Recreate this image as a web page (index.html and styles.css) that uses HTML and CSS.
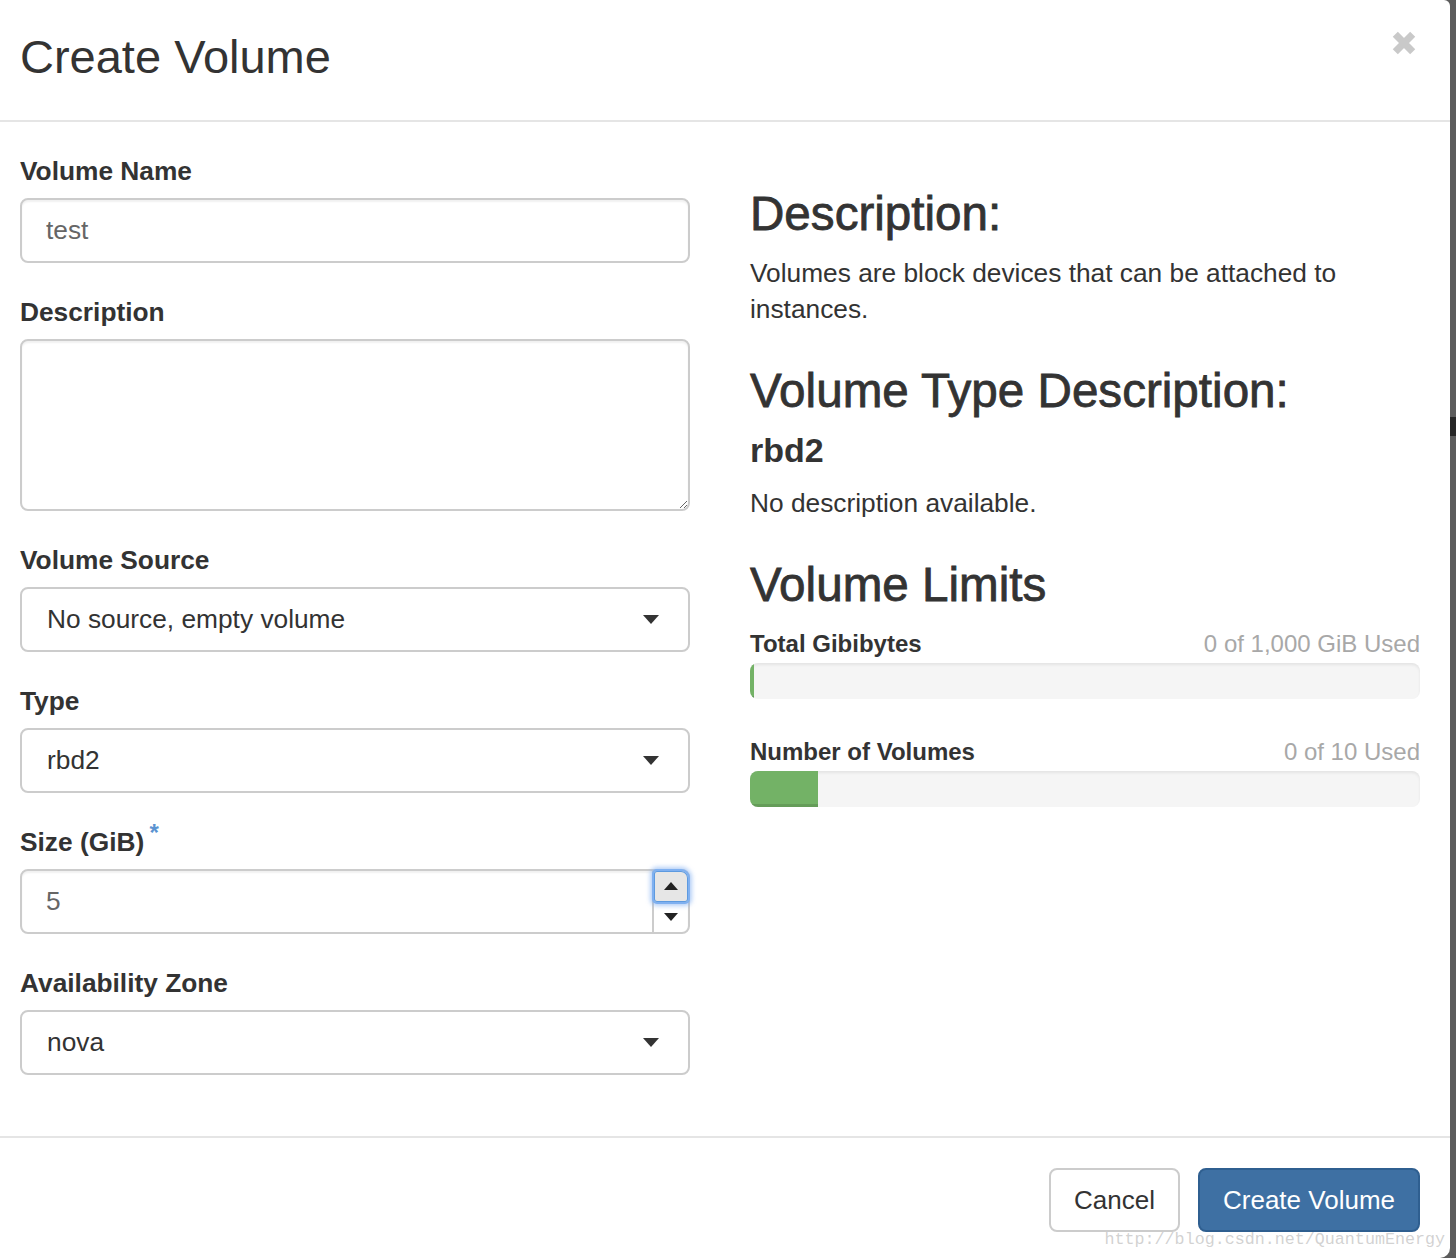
FILE: index.html
```html
<!DOCTYPE html>
<html lang="en">
<head>
<meta charset="utf-8">
<title>Create Volume</title>
<link rel="stylesheet" href="styles.css">
</head>
<body>
<div class="backdrop-mark"></div>
<div class="modal">
  <div class="modal-header">
    <h1 class="modal-title">Create Volume</h1>
    <button class="close" aria-label="Close">
      <svg width="26" height="26" viewBox="0 0 26 26"><path d="M4.3 4.3 L21.7 21.7 M21.7 4.3 L4.3 21.7" stroke="#c9c9c9" stroke-width="7.2" fill="none"/></svg>
    </button>
  </div>
  <div class="modal-body">
    <div class="form-col">
      <div class="field">
        <label class="label">Volume Name</label>
        <input class="control text" value="test">
      </div>
      <div class="field">
        <label class="label">Description</label>
        <textarea class="control area"></textarea>
      </div>
      <div class="field">
        <label class="label">Volume Source</label>
        <div class="control select"><span>No source, empty volume</span><svg class="caret" width="16" height="9" viewBox="0 0 16 9"><path d="M0 0 H16 L8 9 Z" fill="#333"/></svg></div>
      </div>
      <div class="field">
        <label class="label">Type</label>
        <div class="control select"><span>rbd2</span><svg class="caret" width="16" height="9" viewBox="0 0 16 9"><path d="M0 0 H16 L8 9 Z" fill="#333"/></svg></div>
      </div>
      <div class="field">
        <label class="label">Size (GiB) <span class="req">*</span></label>
        <div class="control number">
          <span class="num-val">5</span>
          <span class="spin">
            <span class="spin-up"><svg width="14" height="8" viewBox="0 0 14 8"><path d="M7 0 L14 8 H0 Z" fill="#222"/></svg></span>
            <span class="spin-down"><svg width="14" height="8" viewBox="0 0 14 8"><path d="M0 0 H14 L7 8 Z" fill="#222"/></svg></span>
          </span>
        </div>
      </div>
      <div class="field">
        <label class="label">Availability Zone</label>
        <div class="control select"><span>nova</span><svg class="caret" width="16" height="9" viewBox="0 0 16 9"><path d="M0 0 H16 L8 9 Z" fill="#333"/></svg></div>
      </div>
    </div>
    <div class="info-col">
      <h3 class="info-title first">Description:</h3>
      <p class="info-text">Volumes are block devices that can be attached to instances.</p>
      <h3 class="info-title">Volume Type Description:</h3>
      <h4 class="info-sub">rbd2</h4>
      <p class="info-text">No description available.</p>
      <h3 class="info-title limits">Volume Limits</h3>
      <div class="limit">
        <div class="limit-head"><strong>Total Gibibytes</strong><span class="used">0 of 1,000 GiB Used</span></div>
        <div class="bar"><div class="bar-fill" style="width:4px"></div></div>
      </div>
      <div class="limit">
        <div class="limit-head"><strong>Number of Volumes</strong><span class="used">0 of 10 Used</span></div>
        <div class="bar"><div class="bar-fill" style="width:68px"></div></div>
      </div>
    </div>
  </div>
  <div class="modal-footer">
    <button class="btn btn-default">Cancel</button>
    <button class="btn btn-primary">Create Volume</button>
    <span class="watermark">http://blog.csdn.net/QuantumEnergy</span>
  </div>
</div>
</body>
</html>
```
FILE: styles.css
```css
html, body {
  margin: 0;
  height: 100%;
}
body {
  background: #5c5c5c;
  font-family: "Liberation Sans", Arial, sans-serif;
  color: #333;
  overflow: hidden;
  position: relative;
}
.backdrop-mark {
  position: absolute;
  left: 1450px;
  top: 417px;
  width: 6px;
  height: 19px;
  background: #262626;
}
.modal {
  width: 1450px;
  height: 1258px;
  background: #fff;
  border-radius: 0 6px 10px 0;
  display: flex;
  flex-direction: column;
  position: relative;
}
.modal-header {
  height: 122px;
  box-sizing: border-box;
  border-bottom: 2px solid #e5e5e5;
  display: flex;
  justify-content: space-between;
  align-items: flex-start;
  padding: 0 33px 0 20px;
}
.modal-title {
  margin: 32px 0 0;
  font-size: 47px;
  font-weight: normal;
  line-height: 50px;
}
.close {
  margin-top: 30px;
  border: 0;
  background: none;
  padding: 0;
  width: 26px;
  height: 26px;
  display: block;
}
.close svg { display: block; }
.modal-body {
  flex: 1;
  display: grid;
  grid-template-columns: 670px 670px;
  column-gap: 60px;
  align-content: start;
  padding: 34px 30px 0 20px;
}
.field { margin-bottom: 34px; }
.label {
  display: block;
  font-size: 26.3px;
  font-weight: bold;
  line-height: 30px;
  margin-bottom: 12px;
}
.req {
  color: #5b93d1;
  font-size: 24px;
  line-height: 0;
  vertical-align: 10px;
  margin-left: -2px;
}
.control {
  display: block;
  width: 670px;
  height: 65px;
  box-sizing: border-box;
  border: 2px solid #ccc;
  border-radius: 8px;
  padding: 0 24px;
  font-family: "Liberation Sans", Arial, sans-serif;
  font-size: 26.3px;
  color: #333;
  background: #fff;
  box-shadow: inset 0 2px 2px rgba(0,0,0,.06);
  margin: 0;
}
.text { color: #666; outline: none; }
.area {
  height: 172px;
  padding: 12px 24px;
  resize: both;
  outline: none;
}
.select {
  display: flex;
  align-items: center;
  justify-content: space-between;
  padding: 0 29px 0 25px;
  box-shadow: none;
}
.caret { display: block; }
.number {
  display: flex;
  padding: 0;
}
.num-val {
  flex: 1;
  display: flex;
  align-items: center;
  padding-left: 24px;
  color: #666;
}
.spin {
  width: 34px;
  border-left: 2px solid #ccc;
  display: flex;
  flex-direction: column;
}
.spin-up, .spin-down {
  flex: 1;
  display: flex;
  align-items: center;
  justify-content: center;
}
.spin-up {
  position: relative;
  z-index: 1;
  background: #e6e6e6;
  border-radius: 3px 7px 3px 3px;
  box-shadow: inset 0 0 0 1px #5d9ae0, 0 0 0 2px #7fb0f0, 0 0 4px 4px rgba(120,170,240,.55);
}
.spin svg { display: block; }
.info-title {
  font-size: 47.6px;
  font-weight: normal;
  -webkit-text-stroke: 0.8px #333;
  line-height: 52px;
  margin: 38px 0 15px;
}
.info-title.first { margin-top: 32px; }
.info-title.limits { margin-bottom: 18px; }
.info-text {
  font-size: 26.3px;
  line-height: 36px;
  margin: 0;
}
.info-sub {
  font-size: 34px;
  font-weight: bold;
  line-height: 37px;
  margin: 0 0 16px;
}
.limit + .limit { margin-top: 38px; }
.limit-head {
  display: flex;
  justify-content: space-between;
  align-items: baseline;
  font-size: 24px;
  line-height: 30px;
}
.used { color: #a8a8a8; }
.bar {
  height: 36px;
  margin-top: 4px;
  background: #f5f5f5;
  border-radius: 8px;
  box-shadow: inset 0 2px 3px rgba(0,0,0,.07);
  overflow: hidden;
}
.bar-fill {
  height: 100%;
  background: #73b266;
  box-shadow: inset 0 -3px 0 rgba(0,0,0,.12);
}
.modal-footer {
  height: 122px;
  box-sizing: border-box;
  border-top: 2px solid #e5e5e5;
  display: flex;
  justify-content: flex-end;
  align-items: flex-start;
  gap: 18px;
  padding: 30px 30px 0;
  position: relative;
}
.btn {
  height: 64px;
  box-sizing: border-box;
  padding: 0 23px;
  font-family: "Liberation Sans", Arial, sans-serif;
  font-size: 26px;
  border-radius: 8px;
  border: 2px solid;
  cursor: pointer;
}
.btn-default {
  background: #fff;
  border-color: #ccc;
  color: #333;
}
.btn-primary {
  background: #3e70a3;
  border-color: #2f5f90;
  color: #fff;
}
.watermark {
  position: absolute;
  right: 5px;
  bottom: 8px;
  font-family: "Liberation Mono", "Courier New", monospace;
  font-size: 16.7px;
  line-height: 20px;
  color: rgba(180,180,180,.6);
  white-space: nowrap;
}
```
